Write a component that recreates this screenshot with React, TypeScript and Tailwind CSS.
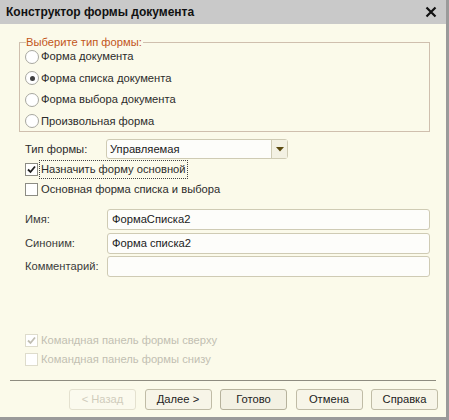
import React from "react";

const font = { fontFamily: '"Liberation Sans", Arial, sans-serif' };

function Radio({ checked, label }: { checked?: boolean; label: string }) {
  return (
    <div className="flex items-center h-[21.5px]">
      <div className="w-[14px] h-[14px] rounded-full border border-[#a8a8a0] bg-white flex items-center justify-center shrink-0">
        {checked && <div className="w-[5px] h-[5px] rounded-full bg-[#404040]" />}
      </div>
      <span className="ml-[2px] text-[11.2px] text-[#2b2b2b]">{label}</span>
    </div>
  );
}

function Check({ checked, label, disabled, focus }: { checked?: boolean; label: string; disabled?: boolean; focus?: boolean }) {
  return (
    <div className="flex items-center h-[19.5px]">
      <div
        className={`w-[13px] h-[13px] border ${disabled ? "border-[#dedccc]" : "border-[#8c8c84]"} bg-white flex items-center justify-center shrink-0`}
      >
        {checked && (
          <svg width="11" height="11" viewBox="0 0 11 11">
            <path d="M2 5.5 L4.5 8 L9 2.5" fill="none" stroke={disabled ? "#c0beb2" : "#202020"} strokeWidth="1.8" />
          </svg>
        )}
      </div>
      <span
        className={`ml-[1px] text-[11.2px] px-[1px] ${disabled ? "text-[#c2bfb2]" : "text-[#2b2b2b]"} ${focus ? "border border-dotted border-[#444]" : "border border-transparent"}`}
      >
        {label}
      </span>
    </div>
  );
}

function Field({ label, value }: { label: string; value: string }) {
  return (
    <div className="flex items-center h-[23.5px]">
      <span className="w-[88px] pl-[6px] text-[11.2px] text-[#3a3a3a]">{label}</span>
      <div className="flex-1 h-[21px] border border-[#cfcbb4] rounded-[3px] bg-[#fdfdfa] flex items-center px-[4px] text-[11.2px] text-[#1a1a1a]">
        {value}
      </div>
    </div>
  );
}

function Btn({ label, disabled, def }: { label: string; disabled?: boolean; def?: boolean }) {
  return (
    <div
      className={`w-[67px] h-[21px] rounded-[3px] border flex items-center justify-center text-[11.2px] ${
        disabled
          ? "border-[#e4e1cf] text-[#d0ccbc] bg-[#fbfaee]"
          : def
          ? "border-[#b6b29c] text-[#222] bg-[#f3f1e3]"
          : "border-[#c0bca6] text-[#222] bg-[#f7f5e8]"
      }`}
    >
      {label}
    </div>
  );
}

export default function App() {
  return (
    <div style={font} className="w-[449px] h-[420px] bg-[#9a9a9a] relative">
      <div className="w-[446px] h-[417px] bg-[#fbfaea] flex flex-col">
        <div className="h-[24px] bg-[#c9c9c9] flex items-center justify-between pl-[6px] pr-[9px]">
          <span className="text-[12px] font-bold text-[#111]">Конструктор формы документа</span>
          <svg width="12" height="12" viewBox="0 0 12 12">
            <path d="M1.5 1.5 L10.5 10.5 M10.5 1.5 L1.5 10.5" stroke="#111" strokeWidth="2.2" />
          </svg>
        </div>
        <div className="flex-1 flex flex-col pl-[19px] pr-[16px]">
          <div className="mt-[18px] relative border border-[#cfbfae] h-[90px] pl-[5px] pt-[3px]">
            <span className="absolute left-[6px] top-[-8px] bg-[#fbfaea] pr-[1px] text-[11.2px] text-[#c2561a] leading-[14px]">
              Выберите тип формы:
            </span>
            <Radio label="Форма документа" />
            <Radio checked label="Форма списка документа" />
            <Radio label="Форма выбора документа" />
            <Radio label="Произвольная форма" />
          </div>
          <div className="mt-[6px] flex items-center h-[22px] pl-[6px]">
            <span className="w-[81px] text-[11.2px] text-[#2b2b2b]">Тип формы:</span>
            <div className="w-[182px] h-[20px] flex border border-[#cfcbb4] rounded-[3px] bg-[#fdfdfa]">
              <div className="flex-1 flex items-center px-[3px] text-[11.2px] text-[#1a1a1a] border-r border-[#cfcbb4]">
                Управляемая
              </div>
              <div className="w-[15px] flex items-center justify-center bg-[#f3f1e3]">
                <svg width="8" height="5" viewBox="0 0 8 5">
                  <path d="M0 0 H8 L4 4.5 Z" fill="#5a4a10" />
                </svg>
              </div>
            </div>
          </div>
          <div className="mt-[0px] pl-[6px]">
            <Check checked focus label="Назначить форму основной" />
            <Check label="Основная форма списка и выбора" />
          </div>
          <div className="mt-[9px] flex flex-col">
            <Field label="Имя:" value="ФормаСписка2" />
            <Field label="Синоним:" value="Форма списка2" />
            <Field label="Комментарий:" value="" />
          </div>
          <div className="mt-[52px] pl-[6px]">
            <Check checked disabled label="Командная панель формы сверху" />
            <Check disabled label="Командная панель формы снизу" />
          </div>
        </div>
        <div className="mx-[10px] border-t border-[#8e8c80]" />
        <div className="h-[36px] flex items-center justify-end gap-[8.5px] pr-[8px]">
          <Btn disabled label="< Назад" />
          <Btn label="Далее >" />
          <Btn def label="Готово" />
          <Btn label="Отмена" />
          <Btn label="Справка" />
        </div>
      </div>
    </div>
  );
}
